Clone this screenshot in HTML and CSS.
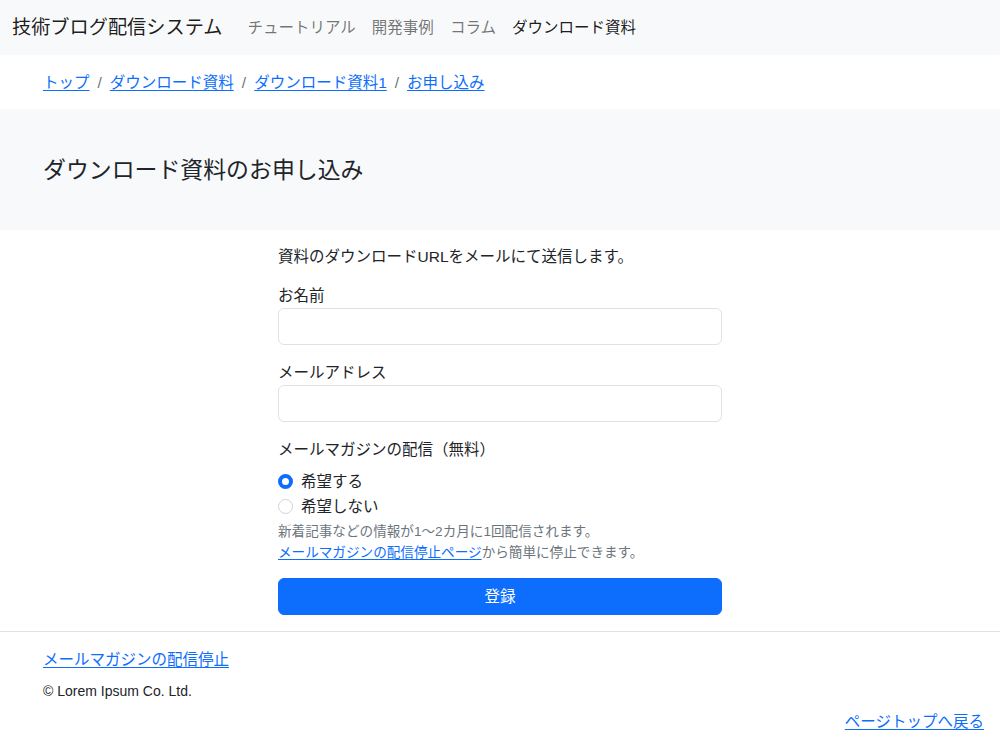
FILE: index.html
```html
<!DOCTYPE html>
<html lang="ja">
<head>
<meta charset="utf-8">
<title>ダウンロード資料のお申し込み</title>
<link rel="stylesheet" href="styles.css">
</head>
<body>
<nav class="navbar">
  <a class="brand" href="#">技術ブログ配信システム</a>
  <ul class="nav">
    <li><a class="nav-link" href="#">チュートリアル</a></li>
    <li><a class="nav-link" href="#">開発事例</a></li>
    <li><a class="nav-link" href="#">コラム</a></li>
    <li><a class="nav-link active" href="#">ダウンロード資料</a></li>
  </ul>
</nav>
<div class="crumbs">
  <a href="#">トップ</a><span class="sep">/</span><a href="#">ダウンロード資料</a><span class="sep">/</span><a href="#">ダウンロード資料1</a><span class="sep">/</span><a href="#">お申し込み</a>
</div>
<header class="band">
  <h1>ダウンロード資料のお申し込み</h1>
</header>
<main class="form-wrap">
  <form class="form">
    <p class="intro">資料のダウンロードURLをメールにて送信します。</p>
    <label class="label" for="name">お名前</label>
    <input class="input" id="name" type="text">
    <label class="label" for="mail">メールアドレス</label>
    <input class="input" id="mail" type="email">
    <div class="label">メールマガジンの配信（無料）</div>
    <div class="radios">
      <label class="radio"><span class="dot checked"></span>希望する</label>
      <label class="radio"><span class="dot"></span>希望しない</label>
    </div>
    <p class="help">新着記事などの情報が1〜2カ月に1回配信されます。<br><a href="#">メールマガジンの配信停止ページ</a>から簡単に停止できます。</p>
    <button class="btn" type="button">登録</button>
  </form>
</main>
<footer class="footer">
  <a class="foot-link" href="#">メールマガジンの配信停止</a>
  <p class="copy">© Lorem Ipsum Co. Ltd.</p>
  <div class="pagetop"><a href="#">ページトップへ戻る</a></div>
</footer>
</body>
</html>
```
FILE: styles.css
```css
* { box-sizing: border-box; }
html, body { margin: 0; padding: 0; }
body {
  font-family: "Liberation Sans", "Noto Sans CJK JP", sans-serif;
  font-size: 15.5px;
  line-height: 23px;
  color: #212529;
  background: #fff;
}
a { color: #0d6efd; text-decoration: underline; text-underline-offset: 2px; }
p { margin: 0; }

.navbar {
  height: 55px;
  background: #f8f9fa;
  display: flex;
  align-items: center;
  padding-left: 12px;
}
.brand {
  font-size: 19.2px;
  color: rgba(0,0,0,.9);
  text-decoration: none;
  margin-right: 17px;
  line-height: 28px;
}
.nav {
  display: flex;
  list-style: none;
  margin: 0;
  padding: 0;
}
.nav-link {
  display: block;
  padding: 0 8px;
  color: rgba(0,0,0,.55);
  text-decoration: none;
}
.nav-link.active { color: rgba(0,0,0,.9); }

.crumbs {
  height: 54px;
  display: flex;
  align-items: center;
  padding-left: 43px;
}
.sep { color: #6c757d; padding: 0 8px; }

.band {
  height: 121px;
  background: #f8f9fa;
  display: flex;
  align-items: center;
  padding-left: 43px;
}
.band h1 {
  margin: 0;
  font-size: 22.9px;
  font-weight: 400;
  line-height: 28px;
}

.form-wrap {
  display: flex;
  justify-content: center;
  padding-top: 15px;
}
.form {
  width: 444px;
  display: flex;
  flex-direction: column;
}
.intro { margin-bottom: 16px; }
.label { display: block; }
.input {
  height: 37px;
  border: 1px solid #dee2e6;
  border-radius: 6px;
  margin: 1px 0 16px;
  font: inherit;
  padding: 6px 12px;
}
.radios {
  display: flex;
  flex-direction: column;
  margin-top: 8px;
}
.radio {
  display: flex;
  align-items: center;
  height: 25px;
}
.dot {
  width: 15px;
  height: 15px;
  border-radius: 50%;
  border: 1px solid #cfd3d7;
  background: #fff;
  margin-right: 8px;
  flex: none;
}
.dot.checked {
  border: 4px solid #0d6efd;
  background: #fff;
}
.help {
  font-size: 13.6px;
  line-height: 21px;
  color: #6c757d;
  margin-top: 2px;
}
.btn {
  margin-top: 15px;
  height: 37px;
  background: #0d6efd;
  color: #fff;
  border: 1px solid #0d6efd;
  border-radius: 6px;
  font: inherit;
  cursor: pointer;
}

.footer {
  margin-top: 16px;
  border-top: 1px solid #dee2e6;
  padding: 16px 16px 0 43px;
}
.foot-link { display: inline-block; }
.copy {
  font-size: 14px;
  line-height: 20px;
  margin-top: 10px;
}
.pagetop {
  text-align: right;
  margin-top: 9px;
}
```
